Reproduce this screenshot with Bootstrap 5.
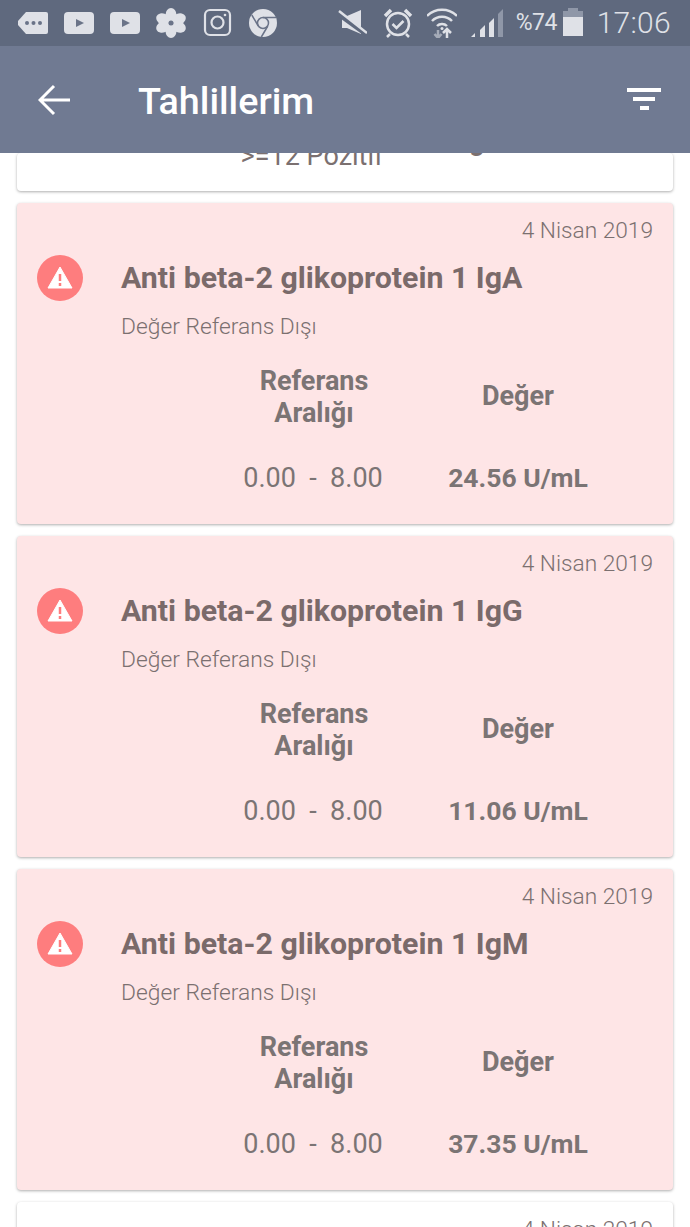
<!DOCTYPE html>
<html lang="tr">
<head>
<meta charset="utf-8">
<title>Tahlillerim</title>
<link href="https://cdn.jsdelivr.net/npm/bootstrap@5.3.0/dist/css/bootstrap.min.css" rel="stylesheet">
<style>
html,body{margin:0;height:1227px;overflow:hidden;background:#fff;font-family:Roboto,"Liberation Sans",sans-serif}
.phone{width:690px;height:1227px}
.sbar{height:46px;background:#5f697e;padding:0 19px 0 18px;color:#dfe1e7;flex:none}
.sico{width:30px;height:30px;display:block}
.ico-alarm{margin-left:16px}
.ico-wifi,.ico-signal{margin-left:14px}
.ico-signal{width:32px}
.ico-batt{width:20px;height:30px;display:block}
.pct{font-size:23px;width:47px;margin-left:13px;letter-spacing:-.5px}
.clock{font-size:30px;font-weight:300;margin-left:14px;line-height:1;letter-spacing:.3px}
.hdr{height:107px;background:#707a92;color:#fff;padding:0 29px 0 38px;flex:none;position:relative;z-index:2}
.hdr-title{font-size:37.700px;font-weight:500;margin:4px 0 0 68px;line-height:1;flex:1}
.feed{padding:0 17px;overflow:hidden;flex:1;gap:12px}
.tcard{border:0;border-radius:4px;box-shadow:0 1px 3px rgba(0,0,0,.32);flex:none;overflow:hidden;color:#7b7070}
.tcard.alert-c{background:#fee5e6;height:321px;padding:16px 20px 0 20px}
.tcard.clip{height:38px;background:#fff}
.tcard.peek{height:60px;background:#fff;padding:16px 20px 0 20px}
.clip-row{position:absolute;left:195px;width:200px;top:-13px;font-size:27px;line-height:32px;text-align:center}
.clip-r{position:absolute;left:420px;top:-28px;font-weight:700;font-size:27px;line-height:32px}
.tdate{font-size:22.700px;font-weight:300;line-height:24px;text-align:right}
.head-row{margin-top:12px;height:46px}
.aicon{width:46px;height:46px;background:#fe7d7e;border-radius:50%;flex:none}
.ttl{font-size:30.300px;font-weight:700;line-height:46px;margin:0 0 0 38px;color:#7a6a6a;white-space:nowrap}
.sub{font-size:22.800px;font-weight:300;line-height:26px;margin:13px 0 0 84px}
.vals{margin:25px 0 0 175px;width:408px;font-size:27px;text-align:center;color:#7b7474}
.vals>div{width:204px}
.th{font-weight:700;line-height:32px;height:64px}
.mid{line-height:62px}
.val{margin-top:33px;line-height:32px}
.val>div:first-child{padding-right:2px}
.valb{font-weight:700;font-size:26.500px}
</style>
</head>
<body>
<div class="phone d-flex flex-column">
  <div class="sbar d-flex align-items-center justify-content-between">
    <div class="d-flex gap-3">
      <svg class="sico" viewBox="0 0 30 30"><path fill="#dfe1e7" d="M8 4h20a2 2 0 0 1 2 2v18a2 2 0 0 1-2 2H8l-8-9v-4z"/><circle cx="9" cy="15" r="2" fill="#6a7388"/><circle cx="15.500" cy="15" r="2" fill="#6a7388"/><circle cx="22" cy="15" r="2" fill="#6a7388"/></svg>
      <svg class="sico" viewBox="0 0 30 30"><rect y="4" width="30" height="22" rx="4" fill="#dfe1e7"/><path d="M12 11l8 4-8 4z" fill="#6a7388"/></svg>
      <svg class="sico" viewBox="0 0 30 30"><rect y="4" width="30" height="22" rx="4" fill="#dfe1e7"/><path d="M12 11l8 4-8 4z" fill="#6a7388"/></svg>
      <svg class="sico" viewBox="0 0 30 30"><g fill="#dfe1e7"><ellipse cx="15" cy="7" rx="5.500" ry="7"/><ellipse cx="15" cy="23" rx="5.500" ry="7"/><ellipse cx="7" cy="11" rx="7" ry="5.500" transform="rotate(25 7 11)"/><ellipse cx="23" cy="11" rx="7" ry="5.500" transform="rotate(-25 23 11)"/><ellipse cx="7" cy="19" rx="7" ry="5.500" transform="rotate(-25 7 19)"/><ellipse cx="23" cy="19" rx="7" ry="5.500" transform="rotate(25 23 19)"/></g><circle cx="15" cy="15" r="2.500" fill="#6a7388"/></svg>
      <svg class="sico" viewBox="0 0 30 30" fill="none" stroke="#dfe1e7" stroke-width="2.200"><rect x="3" y="2" width="25" height="25" rx="5"/><circle cx="15.500" cy="14.500" r="6"/><circle cx="23" cy="7" r="1.300" fill="#dfe1e7" stroke="none"/></svg>
      <svg class="sico" viewBox="0 0 30 30"><circle cx="15" cy="15" r="14" fill="#dfe1e7"/><circle cx="15" cy="15" r="5.500" fill="#dfe1e7" stroke="#6a7388" stroke-width="1.500"/><path d="M15 9.500h13M10.300 18l-6.500-11M19.800 18l-6.500 11" stroke="#6a7388" stroke-width="1.500" fill="none"/></svg>
    </div>
    <div class="d-flex align-items-center">
      <svg class="sico" viewBox="0 0 30 30"><path fill="#dfe1e7" d="M5 8h5L24 2v24L10 20H5z"/><path d="M0 5L29 26" stroke="#5f697e" stroke-width="5"/><path d="M2 3L30 25" stroke="#dfe1e7" stroke-width="2.500"/></svg>
      <svg class="sico ico-alarm" viewBox="0 0 30 30" fill="none" stroke="#dfe1e7" stroke-width="2.500"><circle cx="15" cy="16" r="11"/><path d="M9.500 16l4 4 7-7"/><path d="M2 8l6-6M28 8l-6-6" stroke-width="3.500"/><path d="M7 26l-3 3M23 26l3 3"/></svg>
      <svg class="sico ico-wifi" viewBox="0 0 30 30" fill="none" stroke="#dfe1e7" stroke-width="2.500"><path d="M0 8a21 21 0 0 1 30 0M5 13a14 14 0 0 1 20 0M10 18a7 7 0 0 1 10 0"/><circle cx="15" cy="20.500" r="1.500" fill="#dfe1e7" stroke="none"/><path d="M11 22v8M7.500 26l3.500 4 3.500-4" stroke="#a5abb8"/><path d="M20 30v-9M16 25l4-4 4 4"/></svg>
      <svg class="sico ico-signal" viewBox="0 0 32 30"><path d="M0 29l4-4v4z" fill="#dfe1e7"/><path d="M9 29v-7l5-5v12z" fill="#dfe1e7"/><path d="M18 29V15l5-5v19z" fill="#dfe1e7"/><path d="M27 29V6l5-5v28z" fill="#8f97a8"/></svg>
      <span class="pct">%74</span>
      <svg class="ico-batt" viewBox="0 0 20 30"><rect x="5" y="0" width="10" height="4" fill="#8f97a8"/><rect x="0" y="3" width="20" height="6" fill="#8f97a8"/><rect x="0" y="9" width="20" height="19" fill="#dfe1e7"/></svg>
      <span class="clock">17:06</span>
    </div>
  </div>
  <div class="hdr d-flex align-items-center">
    <svg width="32" height="32" viewBox="0 0 32 32" fill="none" stroke="#fff" stroke-width="3"><path d="M32 16H3M16 2L2 16l14 14"/></svg>
    <h1 class="hdr-title">Tahlillerim</h1>
    <svg width="34" height="24" viewBox="0 0 34 24" fill="#fff"><rect width="34" height="4"/><rect x="6" y="9" width="22" height="4"/><rect x="13" y="18" width="9" height="4"/></svg>
  </div>
  <div class="feed d-flex flex-column">
    <div class="card tcard clip position-relative">
      <div class="clip-r">Değer</div>
      <div class="clip-row">&gt;=12 Pozitif</div>
    </div>
    <div class="card tcard alert-c">
      <div class="tdate">4 Nisan 2019</div>
      <div class="head-row d-flex align-items-center">
        <div class="aicon d-flex align-items-center justify-content-center"><svg width="26" height="24" viewBox="0 0 26 24"><path d="M13 1L25 22H1z" fill="#fff" stroke="#fff" stroke-linejoin="round"/><path d="M13 8v7M13 17v3" stroke="#fe7d7e" stroke-width="2.500"/></svg></div>
        <h2 class="ttl">Anti beta-2 glikoprotein 1 IgA</h2>
      </div>
      <div class="sub">Değer Referans Dışı</div>
      <div class="vals d-flex"><div class="th">Referans<br>Aralığı</div><div class="th mid">Değer</div></div>
      <div class="vals d-flex val"><div>0.00&nbsp; -&nbsp; 8.00</div><div class="valb">24.56 U/mL</div></div>
    </div>
    <div class="card tcard alert-c">
      <div class="tdate">4 Nisan 2019</div>
      <div class="head-row d-flex align-items-center">
        <div class="aicon d-flex align-items-center justify-content-center"><svg width="26" height="24" viewBox="0 0 26 24"><path d="M13 1L25 22H1z" fill="#fff" stroke="#fff" stroke-linejoin="round"/><path d="M13 8v7M13 17v3" stroke="#fe7d7e" stroke-width="2.500"/></svg></div>
        <h2 class="ttl">Anti beta-2 glikoprotein 1 IgG</h2>
      </div>
      <div class="sub">Değer Referans Dışı</div>
      <div class="vals d-flex"><div class="th">Referans<br>Aralığı</div><div class="th mid">Değer</div></div>
      <div class="vals d-flex val"><div>0.00&nbsp; -&nbsp; 8.00</div><div class="valb">11.06 U/mL</div></div>
    </div>
    <div class="card tcard alert-c">
      <div class="tdate">4 Nisan 2019</div>
      <div class="head-row d-flex align-items-center">
        <div class="aicon d-flex align-items-center justify-content-center"><svg width="26" height="24" viewBox="0 0 26 24"><path d="M13 1L25 22H1z" fill="#fff" stroke="#fff" stroke-linejoin="round"/><path d="M13 8v7M13 17v3" stroke="#fe7d7e" stroke-width="2.500"/></svg></div>
        <h2 class="ttl">Anti beta-2 glikoprotein 1 IgM</h2>
      </div>
      <div class="sub">Değer Referans Dışı</div>
      <div class="vals d-flex"><div class="th">Referans<br>Aralığı</div><div class="th mid">Değer</div></div>
      <div class="vals d-flex val"><div>0.00&nbsp; -&nbsp; 8.00</div><div class="valb">37.35 U/mL</div></div>
    </div>
    <div class="card tcard peek">
      <div class="tdate">4 Nisan 2019</div>
    </div>
  </div>
</div>
</body>
</html>
